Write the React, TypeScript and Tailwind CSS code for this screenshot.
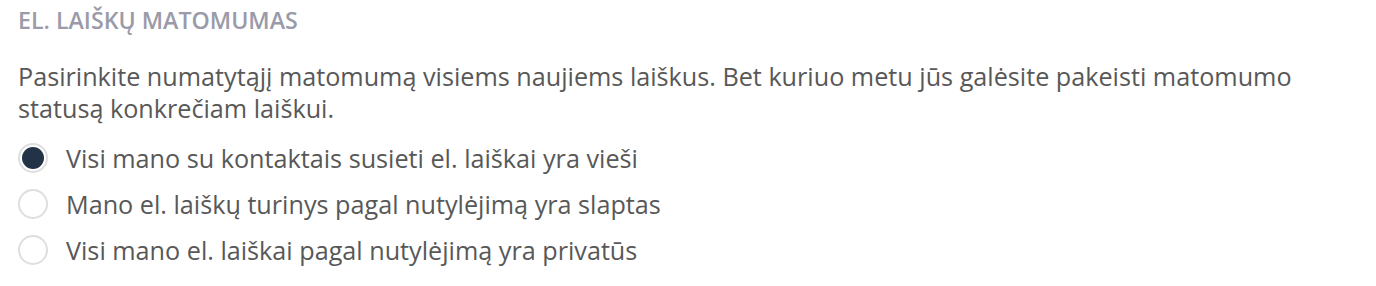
export default function App() {
  const options = [
    "Visi mano su kontaktais susieti el. laiškai yra vieši",
    "Mano el. laiškų turinys pagal nutylėjimą yra slaptas",
    "Visi mano el. laiškai pagal nutylėjimą yra privatūs",
  ];

  return (
    <div className="min-h-screen bg-white px-[18px] pt-[4px] font-['Open_Sans',sans-serif]">
      <h2 className="text-[23.2px] font-semibold uppercase leading-[32px] text-[#9a9aa8]">
        El. laiškų matomumas
      </h2>

      <p className="mt-[24px] text-[25.2px] leading-[32px] text-[#585858]">
        Pasirinkite numatytąjį matomumą visiems naujiems laiškus. Bet kuriuo metu jūs galėsite pakeisti matomumo
        statusą konkrečiam laiškui.
      </p>

      <div className="mt-[18px] flex flex-col gap-[14px]">
        {options.map((label, i) => (
          <label key={label} className="flex items-center gap-[18px] text-[25.2px] leading-[32px] text-[#585858]">
            <span className="flex h-[30px] w-[30px] shrink-0 items-center justify-center rounded-full border-2 border-[#dedede] bg-white">
              {i === 0 && <span className="h-[22px] w-[22px] rounded-full bg-[#223347]" />}
            </span>
            {label}
          </label>
        ))}
      </div>
    </div>
  );
}
